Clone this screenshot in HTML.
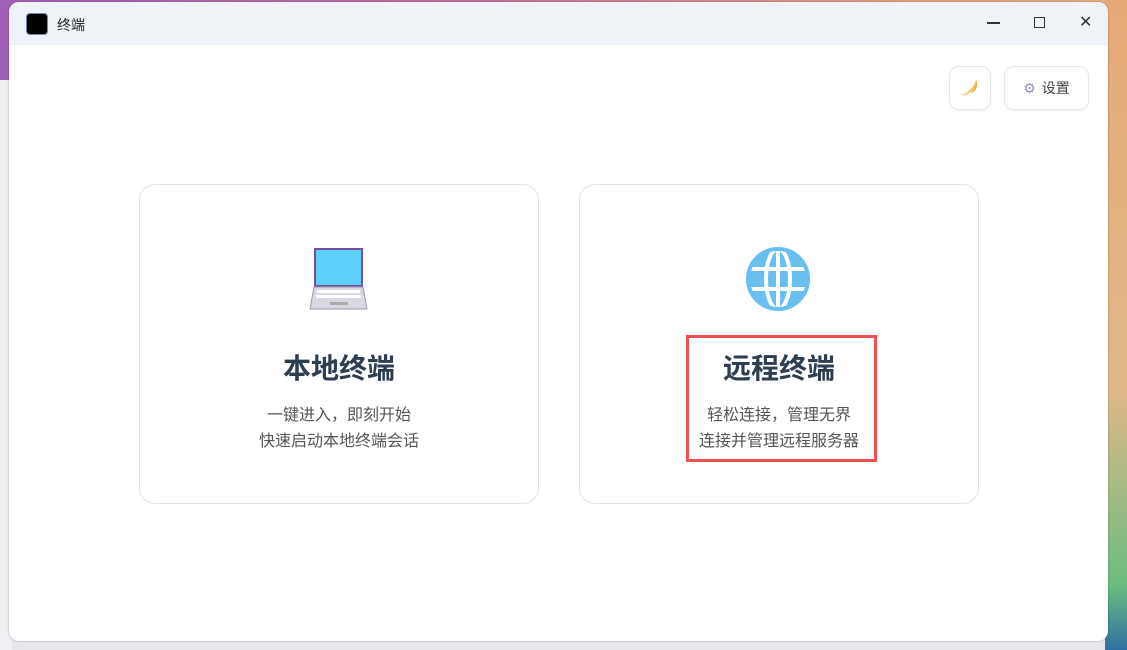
<!DOCTYPE html>
<html><head><meta charset="utf-8"><style>
*{margin:0;padding:0;box-sizing:border-box}
body{width:1127px;height:650px;overflow:hidden;position:relative;font-family:"Liberation Sans","Noto Sans CJK SC",sans-serif;background:linear-gradient(90deg,#a060b8 0%,#c070a0 40%,#e0a080 80%,#e8b080 100%)}
.bottom{position:absolute;left:0;top:80px;width:1127px;height:570px;background:#e6e8ec}
.leftbar{position:absolute;left:0;top:80px;width:12px;height:570px;background:#eef0f3}
.rightbg{position:absolute;left:1105px;top:0;width:22px;height:650px;background:linear-gradient(180deg,#e6aa78 0%,#e0b888 60%,#6cbc80 90%,#3070a0 100%)}
.win{position:absolute;left:9px;top:2px;width:1099px;height:639px;background:#fff;border-radius:10px;overflow:hidden;box-shadow:0 0 2px rgba(0,0,0,.3)}
.tb{height:43px;background:#eff3f8;position:relative}
.logo{position:absolute;left:17px;top:11px;width:22px;height:22px;background:#000;border-radius:4px;border:1px solid #6a8aa8}
.ttl{position:absolute;left:48px;top:13px;font-size:14px;color:#222}
.wc{position:absolute;top:10px;font-size:16px;color:#333}
.btn{position:absolute;top:64px;height:44px;background:#fff;border:1px solid #e4e6ea;border-radius:10px;box-shadow:0 1px 3px rgba(0,0,0,.06);font-size:14px;color:#444;display:flex;align-items:center;justify-content:center}
.card{position:absolute;top:182px;width:400px;height:320px;border:1px solid #dfe2e6;border-radius:16px;background:#fff;text-align:center}
.card h2{position:absolute;top:162px;left:0;right:0;font-size:28px;color:#2c3e50;font-weight:bold}
.card p{position:absolute;left:0;right:0;font-size:16px;color:#555}
</style></head><body>
<div class="bottom"></div><div class="leftbar"></div><div class="rightbg"></div>
<div class="win">
<div class="tb"><div class="logo"></div><div class="ttl">终端</div>
<div class="wc" style="left:978px;top:20px;width:13px;height:1.5px;background:#333"></div>
<div class="wc" style="left:1025px;top:15px;width:11px;height:11px;border:1.5px solid #333"></div>
<div class="wc" style="left:1070px;top:10px">✕</div></div>
<div class="btn" style="left:940px;width:42px"><svg width="22" height="22" viewBox="0 0 22 22"><path d="M17 2 C21 11 14 20 2 17 C4 19 10 19 13 15 C17 11 18 6 17 2Z" fill="#f2a23a"/><path d="M17 2 C19 9 15 16 5 17 C11 14 16 9 17 2Z" fill="#f6bf55"/></svg></div>
<div class="btn" style="left:995px;width:85px"><span style="color:#9a88c0;margin-right:6px">⚙</span>设置</div>
<div class="card" style="left:130px">
<svg style="position:absolute;left:166px;top:62px" width="64" height="64" viewBox="0 0 64 64"><rect x="9" y="2" width="47" height="37" fill="#5cd0f8" stroke="#7a4c9c" stroke-width="2"/><path d="M8 40h49l4 22H4z" fill="#d8d8e2" stroke="#9a9aaa"/><g fill="#fff"><rect x="11" y="43" width="43" height="3"/><rect x="10" y="48" width="45" height="3"/></g><rect x="24" y="55" width="18" height="3" fill="#aaa"/></svg>
<h2>本地终端</h2><p style="top:216px">一键进入，即刻开始</p><p style="top:242px">快速启动本地终端会话</p></div>
<div class="card" style="left:570px">
<svg style="position:absolute;left:166px;top:62px" width="64" height="64" viewBox="0 0 64 64"><circle cx="32" cy="32" r="30" fill="#68bff0"/><g stroke="#fff" stroke-width="4" fill="none"><ellipse cx="32" cy="32" rx="12" ry="30"/><line x1="32" y1="2" x2="32" y2="62"/><line x1="4" y1="22" x2="60" y2="22"/><line x1="4" y1="42" x2="60" y2="42"/></g><circle cx="32" cy="32" r="30" fill="none" stroke="#68bff0" stroke-width="4"/></svg>
<h2>远程终端</h2><p style="top:216px">轻松连接，管理无界</p><p style="top:242px">连接并管理远程服务器</p></div>
<div style="position:absolute;left:677px;top:333px;width:191px;height:127px;border:3px solid #f05050"></div>
</div>
</body></html>
